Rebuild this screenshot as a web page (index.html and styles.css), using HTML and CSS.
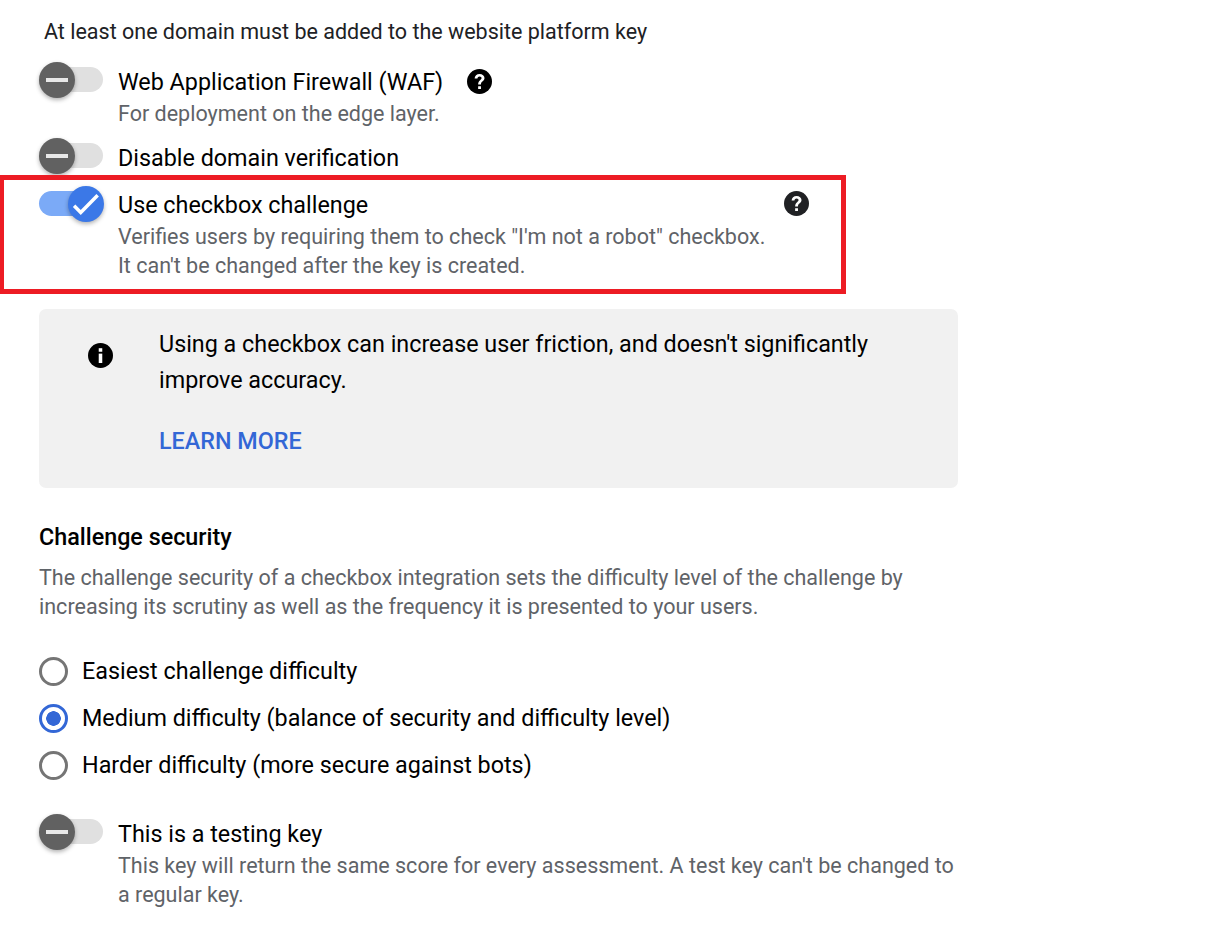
FILE: index.html
```html
<!DOCTYPE html>
<html lang="en">
<head>
<meta charset="utf-8">
<title>Key settings</title>
<link rel="stylesheet" href="styles.css">
</head>
<body>
<main class="page">
  <p class="note">At least one domain must be added to the website platform key</p>

  <div class="row row-waf">
    <span class="toggle"><span class="thumb"><span class="dash"></span></span></span>
    <div class="row-text">
      <div class="label">Web Application Firewall (WAF)
        <svg class="help help-inline" viewBox="0 0 24 24"><path d="M12 0a12 12 0 1 0 0 24 12 12 0 0 0 0-24z" fill="currentColor"/><path d="M10.700 19.200v-2.700h2.700v2.700zM12.100 4.700c2.700 0 4.700 1.600 4.700 4 0 1.500-.8 2.500-2 3.400-1 .8-1.400 1.300-1.400 2.700h-2.700c0-2.200.7-3.100 1.900-4.100.9-.7 1.400-1.200 1.400-2 0-.9-.8-1.600-1.900-1.600-1.200 0-2 .8-2.100 2H7.300c.1-2.700 2-4.400 4.800-4.400z" fill="#fff"/></svg>
      </div>
      <div class="desc">For deployment on the edge layer.</div>
    </div>
  </div>

  <div class="row row-domain">
    <span class="toggle"><span class="thumb"><span class="dash"></span></span></span>
    <div class="row-text"><div class="label">Disable domain verification</div></div>
  </div>

  <div class="row row-checkbox">
    <span class="toggle on"><span class="thumb"><svg class="tick" viewBox="0 0 24 24"><path d="M1.800 13.500l5.700 5.700L22 4.500" fill="none" stroke="#fff" stroke-width="3"/></svg></span></span>
    <div class="row-text">
      <div class="label">Use checkbox challenge</div>
      <div class="desc">Verifies users by requiring them to check "I'm not a robot" checkbox.<br>It can't be changed after the key is created.</div>
    </div>
    <svg class="help help-far" viewBox="0 0 24 24"><path d="M12 0a12 12 0 1 0 0 24 12 12 0 0 0 0-24z" fill="currentColor"/><path d="M10.700 19.200v-2.700h2.700v2.700zM12.100 4.700c2.700 0 4.700 1.600 4.700 4 0 1.500-.8 2.500-2 3.400-1 .8-1.400 1.300-1.400 2.700h-2.700c0-2.200.7-3.100 1.900-4.100.9-.7 1.400-1.200 1.400-2 0-.9-.8-1.600-1.900-1.600-1.200 0-2 .8-2.100 2H7.300c.1-2.700 2-4.400 4.800-4.400z" fill="#fff"/></svg>
    <div class="highlight"></div>
  </div>

  <section class="info">
    <svg class="info-icon" viewBox="0 0 24 24"><circle cx="12" cy="12" r="12" fill="#000"/><rect x="10.300" y="5" width="3.400" height="3.400" fill="#fff"/><rect x="10.300" y="10.200" width="3.400" height="9" fill="#fff"/></svg>
    <div class="info-body">
      <p class="info-text">Using a checkbox can increase user friction, and doesn't significantly improve accuracy.</p>
      <a class="learn" href="#">LEARN MORE</a>
    </div>
  </section>

  <h2 class="heading">Challenge security</h2>
  <p class="para">The challenge security of a checkbox integration sets the difficulty level of the challenge by increasing its scrutiny as well as the frequency it is presented to your users.</p>

  <div class="radios">
    <div class="radio-row"><span class="radio"></span><span class="label">Easiest challenge difficulty</span></div>
    <div class="radio-row"><span class="radio checked"></span><span class="label">Medium difficulty (balance of security and difficulty level)</span></div>
    <div class="radio-row"><span class="radio"></span><span class="label">Harder difficulty (more secure against bots)</span></div>
  </div>

  <div class="row row-test">
    <span class="toggle"><span class="thumb"><span class="dash"></span></span></span>
    <div class="row-text">
      <div class="label">This is a testing key</div>
      <div class="desc">This key will return the same score for every assessment. A test key can't be changed to a regular key.</div>
    </div>
  </div>
</main>
</body>
</html>
```
FILE: styles.css
```css
* { box-sizing: border-box; }
html, body { margin: 0; padding: 0; background: #fff; }
body { font-family: Roboto, "Liberation Sans", sans-serif; color: #000; overflow: hidden; }
.page { width: 1220px; height: 939px; padding: 18px 0 0 39px; }
.note { margin: 0 0 0 5px; font-size: 21.5px; line-height: 28px; color: #202124; }

.row { display: flex; align-items: flex-start; position: relative; }
.row-waf { margin-top: 19px; }
.row-domain { margin-top: 13px; }
.row-checkbox { margin-top: 13px; }
.row-test { margin-top: 35px; }

.toggle { flex: none; position: relative; display: block; width: 64px; height: 25px; margin: 2px 15px 0 0; border-radius: 13px; background: #e0e0e0; }
.row-checkbox .toggle { margin-top: 3px; }
.thumb { position: absolute; left: 0; top: -5px; width: 36px; height: 36px; border-radius: 50%; background: #616161; box-shadow: 0 2px 4px rgba(0,0,0,.3); display: flex; align-items: center; justify-content: center; }
.dash { display: block; width: 22px; height: 4px; background: #e8e8e8; }
.toggle.on { background: #7baaf7; }
.toggle.on .thumb { left: 29px; background: #3b78e7; }
.tick { width: 28px; height: 28px; }

.row-text { flex: 1; max-width: 840px; }
.label { font-size: 23.33px; line-height: 34px; color: #000; }
.desc { font-size: 21.53px; line-height: 29px; color: #5f6368; }

.help { display: block; width: 25px; height: 25px; color: #000; }
.help-inline { display: inline-block; vertical-align: -4px; margin-left: 18px; }
.help-far { position: absolute; left: 745px; top: 3px; color: #202124; }
.highlight { position: absolute; left: -40px; top: -13px; width: 847px; height: 119px; border: 5px solid #ed1c24; pointer-events: none; }

.info { display: flex; width: 919px; height: 179px; margin-top: 29px; background: #f1f1f1; border-radius: 7px; padding: 17px 60px 0 48.5px; }
.info-icon { flex: none; width: 25px; height: 25px; margin: 17px 46.5px 0 0; }
.info-text { margin: 0; font-size: 23.33px; line-height: 36px; color: #000; }
.learn { display: block; margin-top: 25px; font-size: 23.33px; line-height: 36px; font-weight: 500; color: #3367d6; text-decoration: none; }

.heading { margin: 32px 0 0; font-size: 23.33px; line-height: 34px; font-weight: 500; color: #000; }
.para { margin: 9px 0 0; width: 919px; font-size: 21.53px; line-height: 29px; color: #5f6368; }

.radios { display: flex; flex-direction: column; gap: 13px; margin-top: 33px; }
.radio-row { display: flex; align-items: center; height: 34px; }
.radio { flex: none; width: 29px; height: 29px; border-radius: 50%; border: 3.750px solid #757575; margin-right: 14px; background: #fff; }
.radio.checked { border-color: #3367d6; background: radial-gradient(circle, #3367d6 0 7px, #fff 7.500px); }
```
